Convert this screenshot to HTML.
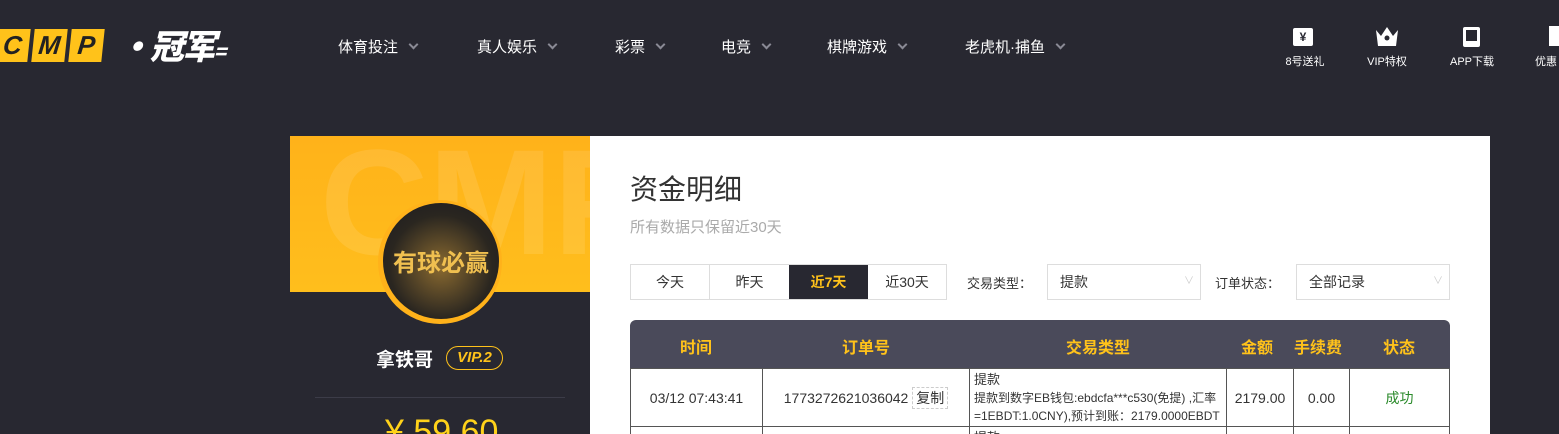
<!DOCTYPE html>
<html><head><meta charset="utf-8"><style>
*{margin:0;padding:0;box-sizing:border-box}
html,body{width:1559px;height:434px;overflow:hidden}
body{background:#282831;font-family:"Liberation Sans","Noto Sans CJK SC",sans-serif;position:relative}
.a{position:absolute}
.nav{color:#fff;font-size:15px;top:36px}
.nav i{display:inline-block;width:7px;height:7px;border-right:2px solid #8a8a95;border-bottom:2px solid #8a8a95;transform:rotate(45deg);margin-left:12px;position:relative;top:-4px}
.ic{color:#fff;font-size:11px;top:53px;text-align:center;width:60px}
.logo span{display:inline-block;background:#ffc21a;color:#222;font:italic 900 26px "Liberation Sans",sans-serif;width:33px;height:33px;text-align:center;line-height:33px;margin-right:4px;transform:skewX(-6deg)}
td{border:1px solid #555;font-size:14px;color:#333;text-align:center;vertical-align:middle}
</style></head><body>
<div class="a logo" style="left:-4px;top:29px">
<span>C</span><span>M</span><span>P</span>
</div>
<div class="a" style="left:118px;top:22px;color:#fff;font:italic 900 34px 'Noto Sans CJK SC',sans-serif;letter-spacing:-2px;line-height:46px">·冠军<span style="font-size:20px">=</span></div>
<div class="a nav" style="left:338px">体育投注<i></i></div>
<div class="a nav" style="left:477px">真人娱乐<i></i></div>
<div class="a nav" style="left:615px">彩票<i></i></div>
<div class="a nav" style="left:721px">电竞<i></i></div>
<div class="a nav" style="left:827px">棋牌游戏<i></i></div>
<div class="a nav" style="left:965px">老虎机·捕鱼<i></i></div>

<div class="a" style="left:1293px;top:28px;width:20px;height:18px;background:#fff;color:#282831;font-size:12px;font-weight:bold;text-align:center;line-height:18px;border-radius:2px">¥</div>
<div class="a ic" style="left:1275px">8号送礼</div>
<svg class="a" style="left:1374px;top:24px" width="26" height="24"><path d="M2 6L7 12L13 3L19 12L24 6L22 22H4Z" fill="#fff"/><circle cx="13" cy="14" r="2.5" fill="#282831"/></svg>
<div class="a ic" style="left:1357px">VIP特权</div>
<div class="a" style="left:1463px;top:27px;width:17px;height:20px;background:#fff;border-radius:2px"><div style="margin:3px 3px;width:11px;height:11px;background:#282831"></div></div>
<div class="a ic" style="left:1442px">APP下载</div>
<div class="a" style="left:1549px;top:26px;width:12px;height:20px;background:#fff"></div>
<div class="a ic" style="left:1535px;width:30px;text-align:left">优惠</div>

<div class="a" style="left:290px;top:136px;width:1200px;height:298px;background:#fff"></div>
<div class="a" style="left:290px;top:136px;width:300px;height:156px;background:linear-gradient(#ffb21a,#ffbe1c);overflow:hidden">
<div style="position:absolute;left:30px;top:-20px;font:bold 150px 'Liberation Sans',sans-serif;color:rgba(255,255,255,.1)">CMP</div></div>
<div class="a" style="left:290px;top:292px;width:300px;height:142px;background:#282831"></div>
<div class="a" style="left:378px;top:200px;width:124px;height:124px;border-radius:50%;background:#ffb21a"></div>
<div class="a" style="left:383px;top:203px;width:116px;height:116px;border-radius:50%;background:radial-gradient(circle at 50% 55%,#8a6a30,#2a2620 60%,#1a1a20);color:#f0c050;font:bold 24px 'Noto Sans CJK SC',sans-serif;text-align:center;line-height:116px">有球必赢</div>
<div class="a" style="left:376px;top:345px;color:#fff;font-size:19px;font-weight:bold">拿铁哥</div>
<div class="a" style="left:446px;top:346px;width:57px;height:24px;border:1px solid #ffc21a;border-radius:12px;color:#ffc21a;font:italic bold 15px 'Liberation Sans',sans-serif;text-align:center;line-height:22px">VIP.2</div>
<div class="a" style="left:315px;top:397px;width:250px;height:1px;background:#3c3c48"></div>
<div class="a" style="left:385px;top:413px;color:#ffd21a;font-size:34px">¥ 59.60</div>

<div class="a" style="left:630px;top:168px;font-size:28px;color:#333">资金明细</div>
<div class="a" style="left:630px;top:216px;font-size:15px;color:#aaa">所有数据只保留近30天</div>
<div class="a" style="left:630px;top:264px;width:317px;height:36px;border:1px solid #ddd;display:flex;font-size:14px;color:#333">
<div style="width:79px;text-align:center;line-height:34px;border-right:1px solid #ddd">今天</div>
<div style="width:79px;text-align:center;line-height:34px">昨天</div>
<div style="width:79px;text-align:center;line-height:34px;background:#282831;color:#ffc21a;font-weight:bold">近7天</div>
<div style="width:78px;text-align:center;line-height:34px">近30天</div></div>
<div class="a" style="left:967px;top:273px;font-size:13px;color:#333">交易类型：</div>
<div class="a" style="left:1047px;top:264px;width:154px;height:36px;border:1px solid #ddd;font-size:14px;color:#333;padding-left:12px;line-height:34px">提款<span style="position:absolute;right:6px;color:#ccc;font-size:10px">∨</span></div>
<div class="a" style="left:1215px;top:273px;font-size:13px;color:#333">订单状态：</div>
<div class="a" style="left:1296px;top:264px;width:154px;height:36px;border:1px solid #ddd;font-size:14px;color:#333;padding-left:12px;line-height:34px">全部记录<span style="position:absolute;right:6px;color:#ccc;font-size:10px">∨</span></div>

<div class="a" style="left:630px;top:320px;width:820px;height:48px;background:#4a4a5a;border-radius:6px 6px 0 0;color:#ffc21a;font-size:16px;font-weight:bold">
<span class="a" style="left:50px;top:14px">时间</span><span class="a" style="left:212px;top:14px">订单号</span><span class="a" style="left:436px;top:14px">交易类型</span><span class="a" style="left:611px;top:14px">金额</span><span class="a" style="left:664px;top:14px">手续费</span><span class="a" style="left:753px;top:14px">状态</span></div>
<div class="a" style="left:630px;top:368px;width:820px;height:66px;overflow:hidden">
<table style="width:820px;border-collapse:collapse">
<tr style="height:58px"><td style="width:132px">03/12 07:43:41</td><td style="width:207px">1773272621036042 <span style="border:1px dashed #ccc;padding:2px 3px">复制</span></td><td style="width:257px;text-align:left;font-size:12px;line-height:18px;padding-left:4px"><span style="font-size:13px">提款</span><br>提款到数字EB钱包:ebdcfa***c530(免提) ,汇率=1EBDT:1.0CNY),预计到账：2179.0000EBDT</td><td style="width:67px">2179.00</td><td style="width:56px">0.00</td><td style="color:#2a8a2a">成功</td></tr>
<tr style="height:20px"><td></td><td></td><td style="text-align:left;font-size:13px;padding-left:4px;vertical-align:top">提款</td><td></td><td></td><td></td></tr>
</table></div>
</body></html>
